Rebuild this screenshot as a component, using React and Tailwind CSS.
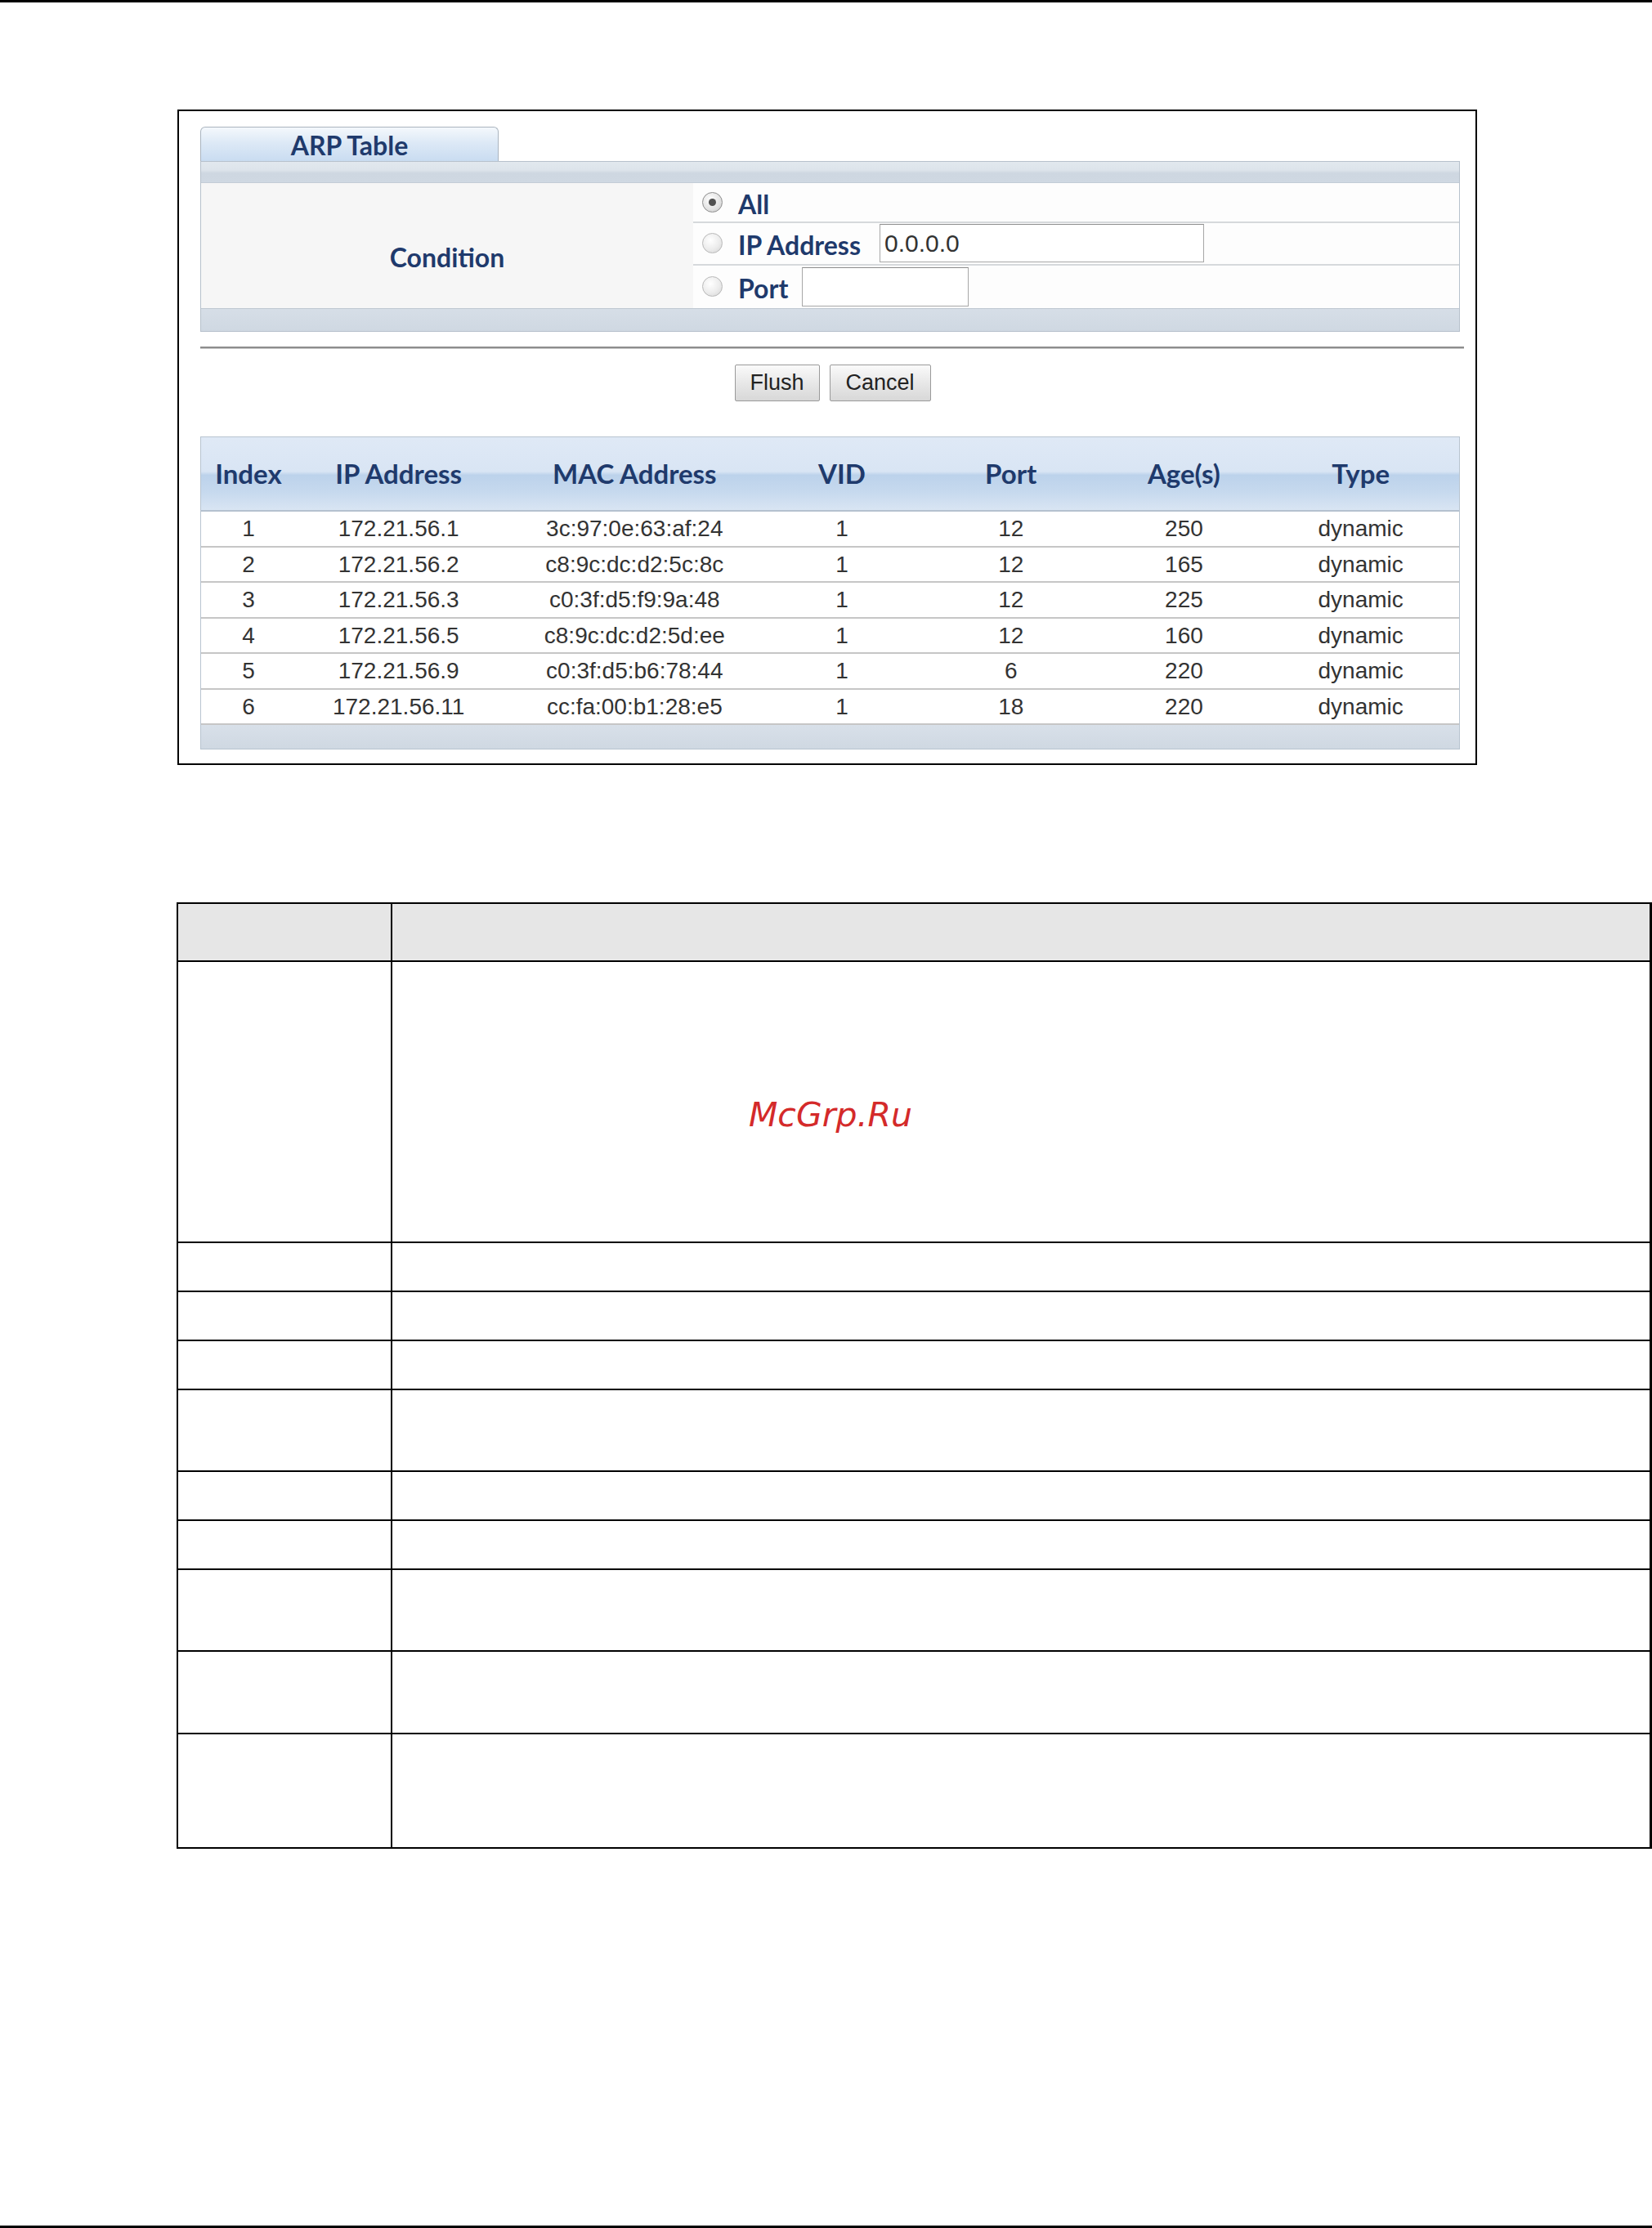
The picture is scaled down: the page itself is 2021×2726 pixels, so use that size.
import React from "react";

const lato = { fontFamily: "Lato, 'DejaVu Sans', sans-serif" };
const arial = { fontFamily: "'Liberation Sans', Arial, sans-serif" };

const rows = [
  ["1", "172.21.56.1", "3c:97:0e:63:af:24", "1", "12", "250", "dynamic"],
  ["2", "172.21.56.2", "c8:9c:dc:d2:5c:8c", "1", "12", "165", "dynamic"],
  ["3", "172.21.56.3", "c0:3f:d5:f9:9a:48", "1", "12", "225", "dynamic"],
  ["4", "172.21.56.5", "c8:9c:dc:d2:5d:ee", "1", "12", "160", "dynamic"],
  ["5", "172.21.56.9", "c0:3f:d5:b6:78:44", "1", "6", "220", "dynamic"],
  ["6", "172.21.56.11", "cc:fa:00:b1:28:e5", "1", "18", "220", "dynamic"],
];
const heads = ["Index", "IP Address", "MAC Address", "VID", "Port", "Age(s)", "Type"];
const colW = ["w-[116px]", "w-[252px]", "w-[326px]", "w-[182px]", "w-[232px]", "w-[192px]", "w-[241px]"];
const rowH = ["h-[44px]", "h-[43px]", "h-[44px]", "h-[43px]", "h-[44px]", "h-[43px]"];

function Radio({ checked }) {
  return (
    <div
      className={
        "w-[25px] h-[25px] rounded-full border shrink-0 flex items-center justify-center " +
        (checked
          ? "border-[#8e8e8e] bg-[radial-gradient(circle_at_40%_35%,#ffffff_0%,#e2e2e2_60%,#c4c4c4_100%)]"
          : "border-[#b9b9b9] bg-[radial-gradient(circle_at_40%_35%,#ffffff_0%,#ececec_55%,#d2d2d2_100%)]")
      }
    >
      {checked && <div className="w-[9px] h-[9px] rounded-full bg-[#505050]" />}
    </div>
  );
}

function Btn({ children, w }) {
  return (
    <div
      className={
        w +
        " h-[45px] border border-[#9a9a9a] rounded-[2px] bg-[linear-gradient(to_bottom,#fafafa,#e6e6e6_55%,#d8d8d8)] flex items-center justify-center text-[27px] text-[#222]"
      }
      style={arial}
    >
      {children}
    </div>
  );
}

const bottomRows = [
  "h-[344px]",
  "h-[60px]",
  "h-[60px]",
  "h-[60px]",
  "h-[100px]",
  "h-[60px]",
  "h-[60px]",
  "h-[100px]",
  "h-[101px]",
  "h-[140px]",
];

export default function App() {
  return (
    <div className="relative w-[2021px] h-[2726px] bg-white flex flex-col">
      <div className="h-[3px] bg-black" />

      {/* Screenshot box */}
      <div className="ml-[217px] mt-[131px] w-[1590px] h-[802px] border-2 border-black pl-[26px] pt-[19px] flex flex-col">
        {/* tab */}
        <div
          className="w-[365px] h-[42px] rounded-t-[6px] border border-b-0 border-[#aab4bf] bg-[linear-gradient(to_bottom,#f4f8fc,#dde9f6_45%,#c9dcf1)] flex items-center justify-center pt-[3px] text-[32px] font-bold text-[#1f3a6c]"
          style={lato}
        >
          ARP Table
        </div>

        {/* condition panel */}
        <div className="w-[1541px] h-[209px] border border-[#b7c1cc] flex flex-col">
          <div className="h-[26px] bg-[linear-gradient(to_bottom,#e2e8ee,#dde4eb_40%,#ced7e1_55%,#cfd8e2)] border-b border-[#c3ccd6]" />
          <div className="flex flex-1">
            <div
              className="w-[602px] bg-[#f6f6f6] flex items-center justify-center pt-[30px] text-[32px] font-bold text-[#1f3a6c]"
              style={lato}
            >
              Condition
            </div>
            <div className="flex-1 flex flex-col bg-[#fdfdfd] text-[32px] font-bold text-[#1f3a6c]" style={lato}>
              <div className="h-[49px] flex items-center pl-[11px] gap-[19px] border-b-2 border-[#d6d9dc]">
                <Radio checked />
                <span className="pt-[5px]">All</span>
              </div>
              <div className="h-[52px] flex items-center pl-[11px] border-b-2 border-[#d6d9dc]">
                <Radio />
                <span className="ml-[19px] pt-[4px]">IP Address</span>
                <div
                  className="ml-[23px] w-[397px] h-[47px] border border-[#a7a7a7] border-t-[#8c8c8c] bg-white flex items-center pl-[5px] text-[30px] font-normal text-[#333]"
                  style={arial}
                >
                  0.0.0.0
                </div>
              </div>
              <div className="flex-1 flex items-center pl-[11px]">
                <Radio />
                <span className="ml-[19px] pt-[4px]">Port</span>
                <div className="ml-[17px] w-[204px] h-[48px] border border-[#a7a7a7] border-t-[#8c8c8c] bg-white" />
              </div>
            </div>
          </div>
          <div className="h-[29px] bg-[linear-gradient(to_bottom,#d6dee7,#cfd8e2)] border-t border-[#bfc8d2]" />
        </div>

        {/* separator */}
        <div className="mt-[18px] w-[1546px] h-[3px] bg-[#8d8d8d] border-b border-[#c9c9c9]" />

        {/* buttons */}
        <div className="w-[1541px] mt-[19px] flex justify-center gap-[12px] pl-[6px]">
          <Btn w="w-[104px]">Flush</Btn>
          <Btn w="w-[124px]">Cancel</Btn>
        </div>

        {/* ARP table */}
        <div className="mt-[43px] w-[1541px] border border-[#b8c4d0] flex flex-col">
          <div className="h-[91px] flex bg-[linear-gradient(to_bottom,#dfe9f6_0%,#d9e5f4_47%,#bcd2eb_52%,#c6d9ee_75%,#d9e5f3_100%)] border-b-2 border-[#b4c1cf]">
            {heads.map((h, i) => (
              <div
                key={h}
                className={colW[i] + " flex items-center justify-center text-[33px] font-bold text-[#1f3a6c]"}
                style={lato}
              >
                {h}
              </div>
            ))}
          </div>
          {rows.map((r, ri) => (
            <div key={ri} className={rowH[ri] + " flex bg-white border-b-2 border-[#c6c6c6]"}>
              {r.map((c, ci) => (
                <div
                  key={ci}
                  className={colW[ci] + " flex items-center justify-center text-[28px] text-[#333]"}
                  style={arial}
                >
                  {c}
                </div>
              ))}
            </div>
          ))}
          <div className="h-[29px] bg-[linear-gradient(to_bottom,#d8e0e9,#cfd8e2)]" />
        </div>
      </div>

      {/* Bottom description table */}
      <div className="ml-[216px] mt-[168px] w-[1805px] border-t-2 border-l-2 border-r-[3px] border-black flex flex-col">
        <div className="h-[71px] flex bg-[#e6e6e6] border-b-2 border-black">
          <div className="w-[262px] border-r-2 border-black" />
          <div className="flex-1" />
        </div>
        {bottomRows.map((h, i) => (
          <div key={i} className={h + " flex border-b-2 border-black"}>
            <div className="w-[262px] border-r-2 border-black" />
            <div className="flex-1" />
          </div>
        ))}
      </div>

      <div className="mt-auto h-[3px] bg-black" />

      {/* watermark */}
      <div
        className="absolute left-[916px] top-[1344px] text-[41px] leading-[41px] italic text-[#d42a2a]"
        style={{ fontFamily: "'DejaVu Sans', sans-serif" }}
      >
        McGrp.Ru
      </div>
    </div>
  );
}
